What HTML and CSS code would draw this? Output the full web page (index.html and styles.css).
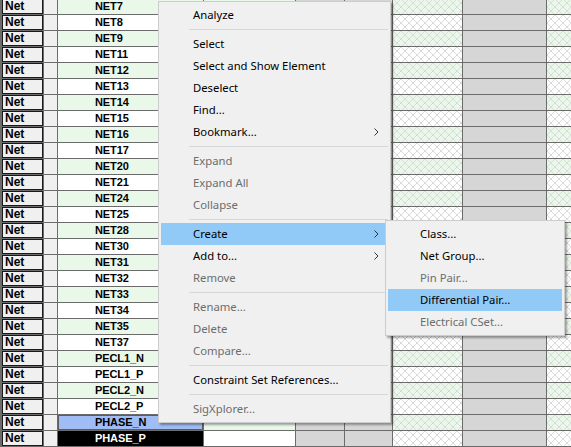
FILE: index.html
```html
<!DOCTYPE html>
<html>
<head>
<meta charset="utf-8">
<title>Constraint Manager</title>
<link rel="stylesheet" href="styles.css">
</head>
<body>
<div class="sheet">
  <div class="row green"><div class="c-type">Net</div><div class="c-flag"></div><div class="c-name">NET7</div><div class="c-val"></div><div class="c-gray"></div><div class="c-gray"></div><div class="c-hatch"></div><div class="c-gray"></div><div class="c-hatch"></div></div>
  <div class="row"><div class="c-type">Net</div><div class="c-flag"></div><div class="c-name">NET8</div><div class="c-val"></div><div class="c-gray"></div><div class="c-gray"></div><div class="c-hatch"></div><div class="c-gray"></div><div class="c-hatch"></div></div>
  <div class="row green"><div class="c-type">Net</div><div class="c-flag"></div><div class="c-name">NET9</div><div class="c-val"></div><div class="c-gray"></div><div class="c-gray"></div><div class="c-hatch"></div><div class="c-gray"></div><div class="c-hatch"></div></div>
  <div class="row"><div class="c-type">Net</div><div class="c-flag"></div><div class="c-name">NET11</div><div class="c-val"></div><div class="c-gray"></div><div class="c-gray"></div><div class="c-hatch"></div><div class="c-gray"></div><div class="c-hatch"></div></div>
  <div class="row green"><div class="c-type">Net</div><div class="c-flag"></div><div class="c-name">NET12</div><div class="c-val"></div><div class="c-gray"></div><div class="c-gray"></div><div class="c-hatch"></div><div class="c-gray"></div><div class="c-hatch"></div></div>
  <div class="row"><div class="c-type">Net</div><div class="c-flag"></div><div class="c-name">NET13</div><div class="c-val"></div><div class="c-gray"></div><div class="c-gray"></div><div class="c-hatch"></div><div class="c-gray"></div><div class="c-hatch"></div></div>
  <div class="row green"><div class="c-type">Net</div><div class="c-flag"></div><div class="c-name">NET14</div><div class="c-val"></div><div class="c-gray"></div><div class="c-gray"></div><div class="c-hatch"></div><div class="c-gray"></div><div class="c-hatch"></div></div>
  <div class="row"><div class="c-type">Net</div><div class="c-flag"></div><div class="c-name">NET15</div><div class="c-val"></div><div class="c-gray"></div><div class="c-gray"></div><div class="c-hatch"></div><div class="c-gray"></div><div class="c-hatch"></div></div>
  <div class="row green"><div class="c-type">Net</div><div class="c-flag"></div><div class="c-name">NET16</div><div class="c-val"></div><div class="c-gray"></div><div class="c-gray"></div><div class="c-hatch"></div><div class="c-gray"></div><div class="c-hatch"></div></div>
  <div class="row"><div class="c-type">Net</div><div class="c-flag"></div><div class="c-name">NET17</div><div class="c-val"></div><div class="c-gray"></div><div class="c-gray"></div><div class="c-hatch"></div><div class="c-gray"></div><div class="c-hatch"></div></div>
  <div class="row green"><div class="c-type">Net</div><div class="c-flag"></div><div class="c-name">NET20</div><div class="c-val"></div><div class="c-gray"></div><div class="c-gray"></div><div class="c-hatch"></div><div class="c-gray"></div><div class="c-hatch"></div></div>
  <div class="row"><div class="c-type">Net</div><div class="c-flag"></div><div class="c-name">NET21</div><div class="c-val"></div><div class="c-gray"></div><div class="c-gray"></div><div class="c-hatch"></div><div class="c-gray"></div><div class="c-hatch"></div></div>
  <div class="row green"><div class="c-type">Net</div><div class="c-flag"></div><div class="c-name">NET24</div><div class="c-val"></div><div class="c-gray"></div><div class="c-gray"></div><div class="c-hatch"></div><div class="c-gray"></div><div class="c-hatch"></div></div>
  <div class="row"><div class="c-type">Net</div><div class="c-flag"></div><div class="c-name">NET25</div><div class="c-val"></div><div class="c-gray"></div><div class="c-gray"></div><div class="c-hatch"></div><div class="c-gray"></div><div class="c-hatch"></div></div>
  <div class="row green"><div class="c-type">Net</div><div class="c-flag"></div><div class="c-name">NET28</div><div class="c-val"></div><div class="c-gray"></div><div class="c-gray"></div><div class="c-hatch"></div><div class="c-gray"></div><div class="c-hatch"></div></div>
  <div class="row"><div class="c-type">Net</div><div class="c-flag"></div><div class="c-name">NET30</div><div class="c-val"></div><div class="c-gray"></div><div class="c-gray"></div><div class="c-hatch"></div><div class="c-gray"></div><div class="c-hatch"></div></div>
  <div class="row green"><div class="c-type">Net</div><div class="c-flag"></div><div class="c-name">NET31</div><div class="c-val"></div><div class="c-gray"></div><div class="c-gray"></div><div class="c-hatch"></div><div class="c-gray"></div><div class="c-hatch"></div></div>
  <div class="row"><div class="c-type">Net</div><div class="c-flag"></div><div class="c-name">NET32</div><div class="c-val"></div><div class="c-gray"></div><div class="c-gray"></div><div class="c-hatch"></div><div class="c-gray"></div><div class="c-hatch"></div></div>
  <div class="row green"><div class="c-type">Net</div><div class="c-flag"></div><div class="c-name">NET33</div><div class="c-val"></div><div class="c-gray"></div><div class="c-gray"></div><div class="c-hatch"></div><div class="c-gray"></div><div class="c-hatch"></div></div>
  <div class="row"><div class="c-type">Net</div><div class="c-flag"></div><div class="c-name">NET34</div><div class="c-val"></div><div class="c-gray"></div><div class="c-gray"></div><div class="c-hatch"></div><div class="c-gray"></div><div class="c-hatch"></div></div>
  <div class="row green"><div class="c-type">Net</div><div class="c-flag"></div><div class="c-name">NET35</div><div class="c-val"></div><div class="c-gray"></div><div class="c-gray"></div><div class="c-hatch"></div><div class="c-gray"></div><div class="c-hatch"></div></div>
  <div class="row"><div class="c-type">Net</div><div class="c-flag"></div><div class="c-name">NET37</div><div class="c-val"></div><div class="c-gray"></div><div class="c-gray"></div><div class="c-hatch"></div><div class="c-gray"></div><div class="c-hatch"></div></div>
  <div class="row green"><div class="c-type">Net</div><div class="c-flag"></div><div class="c-name">PECL1_N</div><div class="c-val"></div><div class="c-gray"></div><div class="c-gray"></div><div class="c-hatch"></div><div class="c-gray"></div><div class="c-hatch"></div></div>
  <div class="row"><div class="c-type">Net</div><div class="c-flag"></div><div class="c-name">PECL1_P</div><div class="c-val"></div><div class="c-gray"></div><div class="c-gray"></div><div class="c-hatch"></div><div class="c-gray"></div><div class="c-hatch"></div></div>
  <div class="row green"><div class="c-type">Net</div><div class="c-flag"></div><div class="c-name">PECL2_N</div><div class="c-val"></div><div class="c-gray"></div><div class="c-gray"></div><div class="c-hatch"></div><div class="c-gray"></div><div class="c-hatch"></div></div>
  <div class="row"><div class="c-type">Net</div><div class="c-flag"></div><div class="c-name">PECL2_P</div><div class="c-val"></div><div class="c-gray"></div><div class="c-gray"></div><div class="c-hatch"></div><div class="c-gray"></div><div class="c-hatch"></div></div>
  <div class="row green"><div class="c-type">Net</div><div class="c-flag"></div><div class="c-name selected">PHASE_N</div><div class="c-val"></div><div class="c-gray"></div><div class="c-gray"></div><div class="c-hatch"></div><div class="c-gray"></div><div class="c-hatch"></div></div>
  <div class="row"><div class="c-type">Net</div><div class="c-flag"></div><div class="c-name current">PHASE_P</div><div class="c-val"></div><div class="c-gray"></div><div class="c-gray"></div><div class="c-hatch"></div><div class="c-gray"></div><div class="c-hatch"></div></div>
</div>

<div class="menu context">
  <div class="item">Analyze</div>
  <div class="sep"></div>
  <div class="item">Select</div>
  <div class="item">Select and Show Element</div>
  <div class="item">Deselect</div>
  <div class="item">Find...</div>
  <div class="item">Bookmark...<svg class="arrow" width="5" height="8" viewBox="0 0 5 8"><polyline points="0.5,0.5 4,4 0.5,7.5" fill="none" stroke="#333" stroke-width="1"/></svg></div>
  <div class="sep"></div>
  <div class="item off">Expand</div>
  <div class="item off">Expand All</div>
  <div class="item off">Collapse</div>
  <div class="sep"></div>
  <div class="item hot">Create<svg class="arrow" width="5" height="8" viewBox="0 0 5 8"><polyline points="0.5,0.5 4,4 0.5,7.5" fill="none" stroke="#333" stroke-width="1"/></svg></div>
  <div class="item">Add to...<svg class="arrow" width="5" height="8" viewBox="0 0 5 8"><polyline points="0.5,0.5 4,4 0.5,7.5" fill="none" stroke="#333" stroke-width="1"/></svg></div>
  <div class="item off">Remove</div>
  <div class="sep"></div>
  <div class="item off">Rename...</div>
  <div class="item off">Delete</div>
  <div class="item off">Compare...</div>
  <div class="sep"></div>
  <div class="item">Constraint Set References...</div>
  <div class="sep"></div>
  <div class="item off">SigXplorer...</div>
</div>

<div class="menu submenu">
  <div class="item">Class...</div>
  <div class="item">Net Group...</div>
  <div class="item off">Pin Pair...</div>
  <div class="item hot">Differential Pair...</div>
  <div class="item off">Electrical CSet...</div>
</div>
</body>
</html>
```

FILE: styles.css
```css
html, body {
  margin: 0;
  padding: 0;
  width: 571px;
  height: 447px;
  overflow: hidden;
  background: #ffffff;
}

/* spreadsheet grid: grid lines are the container colour showing through 1px gaps */
.sheet {
  margin-top: -2px;
  padding: 1px 0 1px 2px;
  background: #6b6b6b;
  display: flex;
  flex-direction: column;
  gap: 1px;
  font-family: "Liberation Sans", Arial, sans-serif;
  font-weight: bold;
  font-size: 11px;
  color: #000;
}

.row {
  display: grid;
  grid-template-columns: 41px 13px 145px 91px 48px 47px 69px 83px 1fr;
  gap: 1px;
  height: 15px;
}

.row > div {
  background-color: #ffffff;
  line-height: 15px;
  white-space: nowrap;
  overflow: hidden;
}

.row > .c-type {
  background-color: #f0f0f0;
  padding-left: 3px;
  font-size: 12px;
  box-shadow: inset -1px -1px 0 #1a1a1a, inset 1px 1px 0 #1a1a1a;
}

.row > .c-flag {
  background-color: #f0f0f0;
}

.c-name {
  padding-left: 37px;
  letter-spacing: -0.1px;
}

.green > .c-name,
.green > .c-val {
  background-color: #eaf8ea;
}

.row > .c-gray {
  background-color: #d6d6d6;
}

/* disabled cells: dotted diamond lattice over the row colour */
.row > .c-hatch {
  background-image: url("data:image/svg+xml,%3Csvg xmlns='http://www.w3.org/2000/svg' width='8' height='8' shape-rendering='crispEdges'%3E%3Cpath fill='%23dadada' d='M0 0h1v1H0zM1 1h1v1H1zM2 2h1v1H2zM3 3h1v1H3zM4 4h1v1H4zM5 5h1v1H5zM6 6h1v1H6zM7 7h1v1H7zM7 0h1v1H7zM6 1h1v1H6zM5 2h1v1H5zM4 3h1v1H4zM3 4h1v1H3zM2 5h1v1H2zM1 6h1v1H1zM0 7h1v1H0z'/%3E%3C/svg%3E");
  background-size: 8px 8px;
}

.green > .c-hatch {
  background-color: #eaf8ea;
}

.row > .c-name.selected {
  background-color: #9fbcf4;
  box-shadow: inset 0 0 0 1px #5c5c5c;
}

.row > .c-name.current {
  background-color: #000000;
  color: #ffffff;
}

/* Windows-style popup menus */
.menu {
  position: absolute;
  box-sizing: border-box;
  background: #f0f0f0;
  border: 1px solid #cccccc;
  padding: 2px;
  box-shadow: 2px 2px 2px rgba(0, 0, 0, 0.35);
  font-family: "Noto Sans", "Open Sans", sans-serif;
  font-size: 11.3px;
  color: #000;
}

.context {
  left: 158px;
  top: 1px;
  width: 233px;
}

.submenu {
  left: 385px;
  top: 220px;
  width: 180px;
}

.item {
  position: relative;
  height: 22px;
  line-height: 22px;
  padding-left: 32px;
  white-space: nowrap;
}

.item.off {
  color: #6d6d6d;
}

.item.hot {
  background: #91c9f7;
}

.arrow {
  position: absolute;
  right: 9px;
  top: 7px;
}

.sep {
  height: 7px;
  position: relative;
}

.sep::after {
  content: "";
  position: absolute;
  left: 28px;
  right: 0;
  top: 3px;
  height: 1px;
  background: #d7d7d7;
}
```
